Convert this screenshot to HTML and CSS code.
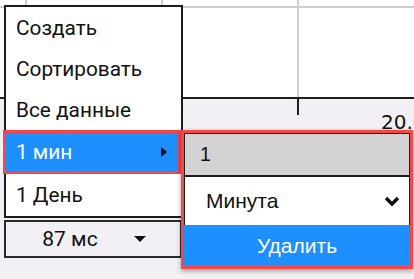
FILE: index.html
```html
<!DOCTYPE html>
<html lang="ru">
<head>
    <meta charset="UTF-8">
    <meta name="viewport" content="width=device-width, initial-scale=1.0">
    <title>График</title>
    <link rel="stylesheet" href="styles.css">
</head>
<body>
    <div class="chart">
        <div class="plot">
            <span class="grid-h"></span>
            <span class="grid-v" style="left: 25px"></span>
            <span class="grid-v" style="left: 161px"></span>
            <span class="grid-v" style="left: 297px"></span>
        </div>
        <div class="axis">
            <span class="tick" style="left: 297px"></span>
            <span class="tick-label" style="left: 381px">20.0</span>
        </div>
    </div>

    <!-- context menu -->
    <div class="menu">
        <div class="menu-item">Создать</div>
        <div class="menu-item">Сортировать</div>
        <div class="menu-item">Все данные</div>
        <div class="menu-item active">
            <span>1 мин</span>
            <span class="arrow-right"></span>
        </div>
        <div class="menu-item">1 День</div>
    </div>

    <div class="interval">
        <span class="interval-value">87 мс</span>
        <span class="arrow-down"></span>
    </div>

    <!-- submenu for the selected item -->
    <div class="submenu">
        <div class="sub-fields">
            <div class="sub-input">1</div>
            <div class="sub-select">
                <span>Минута</span>
                <svg class="chevron" width="16" height="11" viewBox="0 0 16 11">
                    <path d="M2 2 L8 8 L14 2" fill="none" stroke="#111" stroke-width="3.4"/>
                </svg>
            </div>
        </div>
        <button class="sub-button">Удалить</button>
    </div>
</body>
</html>
```

FILE: styles.css
```css
body {
    margin: 0;
    width: 414px;
    height: 279px;
    overflow: hidden;
    background: #f2eff5;
    font-family: Roboto, "Liberation Sans", sans-serif;
    position: relative;
}
.plot {
    position: relative;
    height: 97px;
    background: #fff;
    border-bottom: 2px solid #1c1c1c;
}
.grid-h {
    position: absolute;
    left: 0;
    right: 0;
    top: 6px;
    height: 2px;
    background: #cfcfcf;
}
.grid-v {
    position: absolute;
    top: 0;
    bottom: 0;
    width: 2px;
    background: #cfcfcf;
}
.axis {
    position: relative;
    height: 180px;
}
.tick {
    position: absolute;
    top: 0;
    width: 2px;
    height: 16px;
    background: #1c1c1c;
}
.tick-label {
    position: absolute;
    top: 11px;
    font-family: "DejaVu Sans", sans-serif;
    font-size: 20px;
    line-height: 24px;
    color: #111;
}

.menu {
    position: absolute;
    left: 4px;
    top: 5px;
    width: 175px;
    background: #fff;
    border: 2px solid #1c1c1c;
}
.menu-item {
    height: 41px;
    display: flex;
    align-items: center;
    padding-left: 10px;
    font-size: 20.8px;
    color: #111;
}
.menu-item.active {
    height: 44px;
    box-sizing: border-box;
    margin-left: -3px;
    border: 3px solid #f54648;
    background: #1e8fff;
    color: #fff;
    justify-content: space-between;
    padding-right: 11px;
}
.menu-item:last-child {
    height: 42px;
}
.arrow-right {
    width: 0;
    height: 0;
    border-top: 5px solid transparent;
    border-bottom: 5px solid transparent;
    border-left: 6px solid #111;
}

.interval {
    position: absolute;
    left: 4px;
    top: 220px;
    width: 174px;
    height: 34px;
    border: 2px solid #2a2a2a;
    display: flex;
    align-items: center;
    font-size: 21px;
    color: #111;
}
.interval-value {
    flex: 1;
    text-align: center;
}
.arrow-down {
    width: 0;
    height: 0;
    margin-right: 34px;
    border-left: 6px solid transparent;
    border-right: 6px solid transparent;
    border-top: 6px solid #111;
}

.submenu {
    position: absolute;
    left: 181px;
    top: 130px;
    width: 226px;
    border: 3px solid #f54648;
    background: #fff;
    box-shadow: 0 2px 5px rgba(0, 0, 0, 0.35);
    font-family: "Liberation Sans", Arial, sans-serif;
}
.sub-fields {
    border: 1px solid #1c1c1c;
    border-bottom: none;
}
.sub-input {
    height: 41px;
    background: #d3d3d3;
    border-bottom: 2px solid #1c1c1c;
    display: flex;
    align-items: center;
    padding-left: 15px;
    font-size: 19.5px;
    color: #111;
}
.sub-select {
    height: 48px;
    display: flex;
    align-items: center;
    justify-content: space-between;
    padding: 0 9px 0 21px;
    font-size: 21px;
    color: #111;
}
.sub-button {
    display: block;
    width: 100%;
    height: 41px;
    border: none;
    background: #1e8fff;
    color: #fff;
    font-family: "Liberation Sans", Arial, sans-serif;
    font-size: 21px;
    cursor: pointer;
}
```
